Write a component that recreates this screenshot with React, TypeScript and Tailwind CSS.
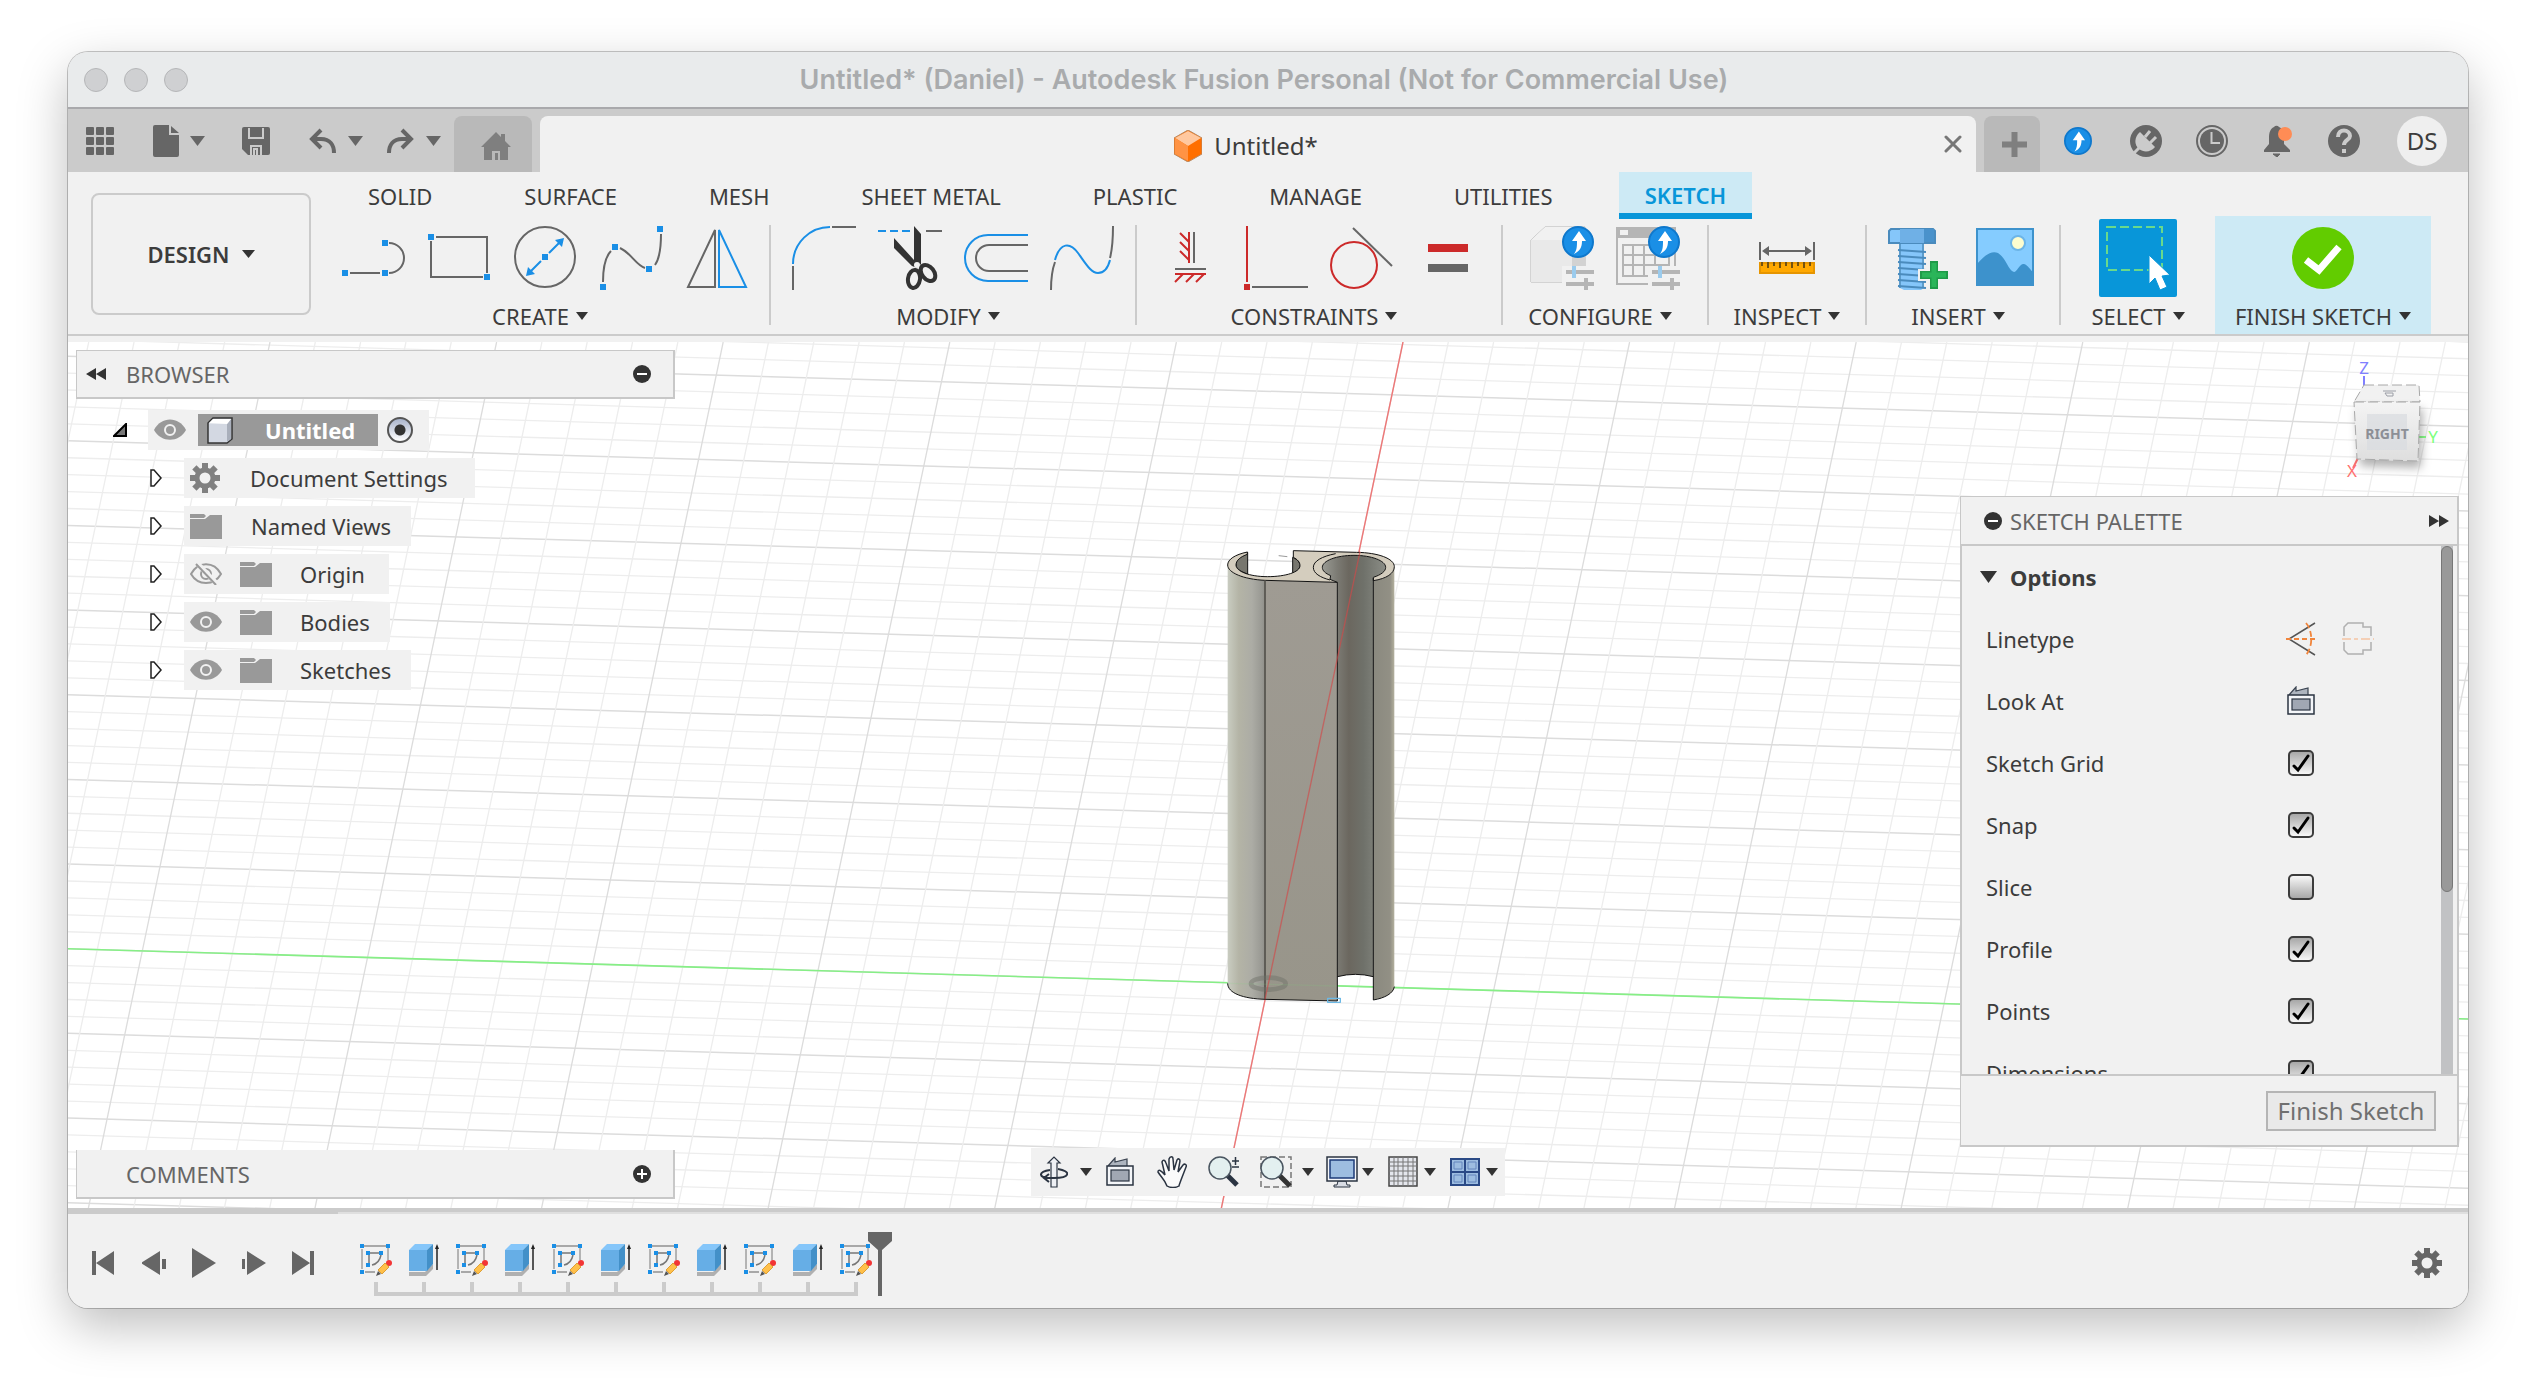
import React from "react";

const BLUE = "#1a8fe6";
const GRAY = "#666666";
const RED = "#cc2a2a";

function Svg({ w, h, children, box }: { w: number; h: number; children: React.ReactNode; box?: string }) {
  return (
    <svg width={w} height={h} viewBox={box ?? `0 0 ${w} ${h}`} fill="none" aria-hidden="true" className="block shrink-0">
      {children}
    </svg>
  );
}

function Caret({ w = 12, h = 8, color = "#333" }: { w?: number; h?: number; color?: string }) {
  return (
    <Svg w={w} h={h}>
      <path d={`M0 0H${w}L${w / 2} ${h}Z`} fill={color} />
    </Svg>
  );
}

/* ---------- title bar ---------- */

function TitleBar() {
  return (
    <header className="relative flex h-[57px] shrink-0 items-center border-b-2 border-[#a9a9ac] bg-[#e9ebec] px-4">
      <div className="flex gap-4">
        {["Close", "Minimise", "Zoom"].map((n) => (
          <button key={n} aria-label={n} className="size-6 rounded-full border border-[#b5b6b8] bg-[#cfd0d2]" />
        ))}
      </div>
      <h1 className="flex-1 pr-[112px] text-center font-['Inter'] text-[27px] font-semibold text-[#a9abad]">
        Untitled* (Daniel) - Autodesk Fusion Personal (Not for Commercial Use)
      </h1>
    </header>
  );
}

/* ---------- tab bar ---------- */

function UploadBadge({ cx, cy, r }: { cx: number; cy: number; r: number }) {
  return (
    <g transform={`translate(${cx} ${cy}) scale(${r / 16})`}>
      <circle r="15" fill={BLUE} stroke="#0f78cc" strokeWidth="2" />
      <path d="M1-11L8-1H4C4 5 2 9-4 12C-1 8-1 4-1-1H-6Z" fill="#fff" />
    </g>
  );
}

function TabBar() {
  return (
    <nav className="flex h-[63px] shrink-0 items-end bg-[#cbcbcb]">
      <div className="flex h-full w-[386px] shrink-0 items-center pl-[18px]">
        <button aria-label="Data panel">
          <Svg w={28} h={28}>
            {[0, 10, 20].map((y) =>
              [0, 10, 20].map((x) => <rect key={`${x}-${y}`} x={x} y={y} width="8" height="8" rx="1" fill={GRAY} />)
            )}
          </Svg>
        </button>
        <button aria-label="File" className="ml-[39px] flex items-center gap-[11px]">
          <Svg w={26} h={32}>
            <path d="M2 0H16V10H26V30a2 2 0 0 1-2 2H2a2 2 0 0 1-2-2V2a2 2 0 0 1 2-2Z" fill={GRAY} />
            <path d="M18 1L26 8H18Z" fill={GRAY} />
          </Svg>
          <Caret w={15} h={10} color={GRAY} />
        </button>
        <button aria-label="Save" className="ml-[37px]">
          <Svg w={28} h={28}>
            <path d="M2 0H26a2 2 0 0 1 2 2V26a2 2 0 0 1-2 2H6L0 22V2a2 2 0 0 1 2-2Z" fill={GRAY} />
            <path d="M7 1V11H21V1M9 28V19H19V28" stroke="#cbcbcb" strokeWidth="2" />
            <path d="M15 28V22H12V28" stroke="#cbcbcb" strokeWidth="2" />
          </Svg>
        </button>
        <button aria-label="Undo" className="ml-[39px] flex items-center gap-3">
          <Svg w={27} h={26}>
            <path d="M12 2L3 11L12 20M4 11H12C21 11 25 17 25 25" stroke={GRAY} strokeWidth="4" />
          </Svg>
          <Caret w={15} h={10} color={GRAY} />
        </button>
        <button aria-label="Redo" className="ml-6 flex items-center gap-3">
          <Svg w={27} h={26}>
            <path d="M15 2L24 11L15 20M23 11H15C6 11 2 17 2 25" stroke={GRAY} strokeWidth="4" />
          </Svg>
          <Caret w={15} h={10} color={GRAY} />
        </button>
      </div>
      <button aria-label="Home" className="flex h-14 w-[78px] shrink-0 items-center justify-center rounded-t-lg bg-[#b9b9b9] pt-1 pl-[6px]">
        <Svg w={30} h={28}>
          <path d="M15 0L20 5V2H24V9L30 15H27V28H19V19H11V28H3V15H0Z" fill="#7f7f7f" />
          <rect x="14" y="21" width="3" height="7" fill="#7f7f7f" />
        </Svg>
      </button>
      <div className="ml-2 flex h-14 flex-1 items-center rounded-t-lg bg-[#f1f1f1] pr-[14px]">
        <div className="flex flex-1 items-center justify-center gap-3 pt-1 pl-2">
          <Svg w={28} h={32}>
            <path d="M14 0L28 8V24L14 32L0 24V8Z" fill="#ff6f00" stroke="#b98a63" strokeWidth="1" />
            <path d="M14 1L27 8L14 16L1 8Z" fill="#ffc89f" />
            <path d="M1 8L14 16V31L1 24Z" fill="#ff9344" />
          </Svg>
          <span className="text-[24px] leading-8 text-[#3c3c3c]">Untitled*</span>
        </div>
        <button aria-label="Close tab">
          <Svg w={18} h={18}>
            <path d="M2 2L16 16M16 2L2 16" stroke="#777" strokeWidth="3" strokeLinecap="round" />
          </Svg>
        </button>
      </div>
      <button aria-label="New tab" className="ml-2 flex h-14 w-14 shrink-0 items-center justify-center rounded-t-lg bg-[#b9b9b9] pl-1">
        <Svg w={25} h={25}>
          <path d="M12.500 0V25M0 12.500H25" stroke="#7f7f7f" strokeWidth="6" />
        </Svg>
      </button>
      <div className="flex h-full shrink-0 items-center pr-[21px] pl-[22px]">
        <button aria-label="Upload">
          <Svg w={32} h={32}><UploadBadge cx={16} cy={16} r={14} /></Svg>
        </button>
        <button aria-label="Extensions" className="ml-9">
          <Svg w={32} h={32}>
            <circle cx="16" cy="16" r="16" fill={GRAY} />
            <path d="M10 7L25 22C21 27 14 28 9 24C4 20 4 12 10 7Z" fill="#cbcbcb" />
            <path d="M15 12L20 6M20 18L26 12" stroke="#cbcbcb" strokeWidth="3" />
            <path d="M9 23L4 28" stroke="#cbcbcb" strokeWidth="3" />
          </Svg>
        </button>
        <button aria-label="Job status" className="ml-[34px]">
          <Svg w={32} h={32}>
            <circle cx="16" cy="16" r="15" stroke={GRAY} strokeWidth="2" />
            <circle cx="16" cy="16" r="12" fill={GRAY} />
            <path d="M15.500 7V18H24" stroke="#cbcbcb" strokeWidth="2" />
          </Svg>
        </button>
        <button aria-label="Notifications" className="ml-[34px]">
          <Svg w={32} h={32}>
            <path d="M12 2a3 3 0 0 1 5 0C21 4 22 8 22 13V19L28 25V27H2V25L7 19V13C7 8 8 4 12 2Z" fill={GRAY} />
            <path d="M11 29H18L15 32Z" fill={GRAY} stroke={GRAY} />
            <circle cx="23" cy="9" r="7" fill="#ff8c55" />
          </Svg>
        </button>
        <button aria-label="Help" className="ml-[34px]">
          <Svg w={32} h={32}>
            <circle cx="16" cy="16" r="16" fill={GRAY} />
            <path d="M10 12C10 3 22 4 22 11C22 15 16 15 16 20" stroke="#cbcbcb" strokeWidth="4" />
            <rect x="14" y="24" width="4" height="4" fill="#cbcbcb" />
          </Svg>
        </button>
        <button className="ml-[37px] size-[50px] rounded-full bg-[#efefef] text-[24px] text-[#3c3c3c]">DS</button>
      </div>
    </nav>
  );
}

/* ---------- ribbon icons ---------- */

function Dot({ x, y, fill = BLUE }: { x: number; y: number; fill?: string }) {
  return <rect x={x - 3} y={y - 3} width="6" height="6" fill={fill} />;
}

const icons: Record<string, React.ReactNode> = {
  Line: (
    <Svg w={64} h={64}>
      <path d="M9 47H39M48 17a15 15 0 0 1 0 30" stroke={GRAY} strokeWidth="2" />
      <Dot x={4} y={47} /><Dot x={44} y={47} /><Dot x={44} y={17} />
    </Svg>
  ),
  Rectangle: (
    <Svg w={64} h={64}>
      <path d="M9 11H60V47M4 15V51H56" stroke={GRAY} strokeWidth="2" />
      <Dot x={4} y={11} /><Dot x={60} y={51} />
    </Svg>
  ),
  Circle: (
    <Svg w={64} h={64}>
      <circle cx="32" cy="31" r="30" stroke={GRAY} strokeWidth="2" />
      <path d="M36 27L47 16M28 35L17 46" stroke={BLUE} strokeWidth="2" />
      <path d="M51 12L49 21L42 14ZM13 50L15 41L22 48Z" fill={BLUE} />
      <Dot x={32} y={31} />
    </Svg>
  ),
  Spline: (
    <Svg w={64} h={64}>
      <path d="M4 56C4 42 7 30 12 25M21 22C32 27 37 39 46 42M56 39C61 32 62 22 62 8" stroke={GRAY} strokeWidth="2" />
      <Dot x={4} y={61} /><Dot x={16} y={21} /><Dot x={50} y={43} /><Dot x={61} y={3} />
    </Svg>
  ),
  Mirror: (
    <Svg w={64} h={64}>
      <path d="M30 4V61H3Z" stroke={GRAY} strokeWidth="2" />
      <path d="M34 4V61H61Z" stroke={BLUE} strokeWidth="2" />
    </Svg>
  ),
  Fillet: (
    <Svg w={64} h={64}>
      <path d="M1 40V64M40 1H64" stroke={GRAY} strokeWidth="2" />
      <path d="M1 38C1 17 18 1 38 1" stroke={BLUE} strokeWidth="2" />
    </Svg>
  ),
  Trim: (
    <Svg w={64} h={64}>
      <path d="M0 5H8M12 5H20M24 5H32" stroke={BLUE} strokeWidth="2" />
      <path d="M48 5H64" stroke={GRAY} strokeWidth="2" />
      <path d="M36 0L43 8V38L39 42L34 40L16 22V12L36 34Z" fill="#333" />
      <circle cx="39" cy="39" r="3" fill="#f1f1f1" />
      <ellipse cx="36" cy="53" rx="6" ry="9" transform="rotate(8 36 53)" stroke="#333" strokeWidth="4" />
      <ellipse cx="50" cy="47" rx="6" ry="9" transform="rotate(-38 50 47)" stroke="#333" strokeWidth="4" />
    </Svg>
  ),
  Offset: (
    <Svg w={64} h={64}>
      <path d="M64 9H24a23 23 0 0 0 0 46H64" stroke={BLUE} strokeWidth="2" />
      <path d="M64 19H25a13 13 0 0 0 0 26H64" stroke={GRAY} strokeWidth="2" />
    </Svg>
  ),
  Extend: (
    <Svg w={64} h={64}>
      <path d="M1 64C1 53 2 44 5 36M60 32C62 24 63 14 63 0" stroke={GRAY} strokeWidth="2" />
      <path d="M5 34C10 16 20 16 28 27C36 38 41 47 48 47C54 47 58 42 60 34" stroke={BLUE} strokeWidth="2" />
    </Svg>
  ),
  Horizontal: (
    <Svg w={64} h={64}>
      <path d="M31 6V37M22 7L31 16M22 16L31 25M22 25L31 34M17 48H48M17 56L25 48M28 56L36 48M38 56L46 48" stroke={RED} strokeWidth="2" />
      <path d="M36 6V37M17 43H48" stroke={GRAY} strokeWidth="2" />
    </Svg>
  ),
  Perpendicular: (
    <Svg w={64} h={64}>
      <path d="M3 0V56" stroke={RED} strokeWidth="2" />
      <Dot x={3} y={61} fill={RED} />
      <path d="M8 61H64" stroke={GRAY} strokeWidth="2" />
    </Svg>
  ),
  Tangent: (
    <Svg w={64} h={64}>
      <circle cx="24" cy="39" r="23" stroke={RED} strokeWidth="2" />
      <path d="M23 2L62 40" stroke={GRAY} strokeWidth="2" />
    </Svg>
  ),
  Equal: (
    <Svg w={64} h={64}>
      <rect x="12" y="18" width="40" height="8" fill={RED} />
      <rect x="12" y="38" width="40" height="8" fill={GRAY} />
    </Svg>
  ),
  Configure: (
    <Svg w={64} h={64}>
      <path d="M1 14L15 1H55V56H1Z" fill="#e6e6e6" stroke="#b5b5b5" />
      <path d="M1 14H42V56H1Z" fill="#e9e9e9" />
      <path d="M1 14L15 1H55L42 14Z" fill="#f1f1f1" />
      <path d="M42 14L55 1V56H42Z" fill="#d2d2d2" />
      <path d="M32 40H64V64H32Z" fill="#f1f1f1" />
      <path d="M36 46H64M36 58H64M56 52V64" stroke="#b5b5b5" strokeWidth="4" />
      <path d="M44 40V52" stroke="#9acbed" strokeWidth="4" />
      <UploadBadge cx={48} cy={16} r={16} />
    </Svg>
  ),
  "Configuration table": (
    <Svg w={64} h={64}>
      <path d="M1 2H59V58H1Z" stroke="#b5b5b5" strokeWidth="2" />
      <rect x="0" y="1" width="60" height="11" fill="#b5b5b5" />
      <rect x="4" y="4" width="8" height="5" fill="#f1f1f1" />
      <path d="M7 19H53V50H7ZM17 19V50M28 19V50M39 19V50M7 29H53M7 39H53" stroke="#b5b5b5" strokeWidth="2" />
      <path d="M32 40H64V64H32Z" fill="#f1f1f1" />
      <path d="M36 46H64M36 58H64M56 52V64" stroke="#b5b5b5" strokeWidth="4" />
      <path d="M44 40V52" stroke="#9acbed" strokeWidth="4" />
      <UploadBadge cx={48} cy={16} r={16} />
    </Svg>
  ),
  Measure: (
    <Svg w={64} h={64}>
      <path d="M5 16V34M59 16V34M12 25H52" stroke={GRAY} strokeWidth="2" />
      <path d="M7 25L14 20V30ZM57 25L50 20V30Z" fill={GRAY} />
      <rect x="5" y="37" width="54" height="10" fill="#ffa800" stroke="#e69500" strokeWidth="2" />
      <path d="M7 36V40M13 36V42M19 36V40M25 36V42M31 36V40M37 36V42M43 36V40M49 36V42M55 36V40" stroke="#73510f" strokeWidth="2" />
    </Svg>
  ),
  "Insert fastener": (
    <Svg w={64} h={64}>
      <path d="M3 3H45L47 5V17H1V5Z" fill="#85c6fa" stroke="#4a8bbd" strokeWidth="2" />
      <path d="M12 3H36V17H12Z" fill="#6fb0e6" /><path d="M36 3H46V16H36Z" fill="#4a92cb" />
      <path d="M12 18H36V62L33 64H16L12 62Z" fill="#85c6fa" />
      <path d="M12 18V62M35 18V62" stroke="#5d9ccb" strokeWidth="2" />
      <path d="M10 24L38 26M10 30L38 32M10 36L38 38M10 42L38 44M10 48L38 50M10 54L38 56M10 60L38 62" stroke="#4a8bbd" strokeWidth="2" />
      <path d="M46 34V64M30 49H62" stroke="#f1f1f1" strokeWidth="12" />
      <path d="M46 35V63M32 49H60" stroke="#1f9a48" strokeWidth="8" />
      <path d="M46 37V61M34 49H58" stroke="#2ab559" strokeWidth="5" />
    </Svg>
  ),
  "Insert image": (
    <Svg w={64} h={64}>
      <rect x="3" y="3" width="56" height="56" fill="#85ccff" stroke="#3d92cc" strokeWidth="2" />
      <circle cx="44" cy="17" r="7" fill="#fdfdcf" stroke="#6cb5e8" strokeWidth="2" />
      <path d="M3 38C10 30 17 24 24 27C32 32 34 44 40 46C43 46 46 37 50 38C54 39 56 44 60 47V60H3Z" fill="#3d92cc" />
    </Svg>
  ),
  "Select tool": (
    <Svg w={78} h={78}>
      <rect width="78" height="78" rx="2" fill="#0896d9" />
      <rect x="8" y="8" width="55" height="43" stroke="#69d98b" strokeWidth="2" strokeDasharray="9 4" />
      <path d="M50 36L71 56L63 57L68 68L61 71L56 59L50 65Z" fill="#fff" stroke="#0896d9" />
    </Svg>
  ),
  Finish: (
    <Svg w={64} h={64}>
      <circle cx="32" cy="32" r="31" fill="#62cc00" />
      <path d="M15 34L28 44L48 21" stroke="#fff" strokeWidth="7" />
    </Svg>
  ),
};

type Group = { label: string; tools: string[]; box: string; sep: boolean };
const groups: Group[] = [
  { label: "CREATE", tools: ["Line", "Rectangle", "Circle", "Spline", "Mirror"], box: "pr-[20px]", sep: false },
  { label: "MODIFY", tools: ["Fillet", "Trim", "Offset", "Extend"], box: "px-[21px]", sep: true },
  { label: "CONSTRAINTS", tools: ["Horizontal", "Perpendicular", "Tangent", "Equal"], box: "px-[21px]", sep: true },
  { label: "CONFIGURE", tools: ["Configure", "Configuration table"], box: "w-[204px]", sep: true },
  { label: "INSPECT", tools: ["Measure"], box: "w-[156px]", sep: true },
  { label: "INSERT", tools: ["Insert fastener", "Insert image"], box: "w-[192px]", sep: true },
  { label: "SELECT", tools: ["Select tool"], box: "w-[154px]", sep: true },
  { label: "FINISH SKETCH", tools: ["Finish"], box: "bg-[#cdeaf5] w-[216px]", sep: false },
];

const tabs = ["SOLID", "SURFACE", "MESH", "SHEET METAL", "PLASTIC", "MANAGE", "UTILITIES"];

function Ribbon() {
  return (
    <section className="shrink-0 border-b-[6px] border-[#f1f1f1] bg-[#f1f1f1]">
      <div className="flex border-b-2 border-[#cbcbcb] pl-[23px]">
        <button className="mt-[21px] flex h-[122px] w-[220px] shrink-0 items-center justify-center gap-3 rounded-lg border-2 border-[#cbcbcb] text-[22px] font-semibold text-[#3c3c3c]">
          DESIGN <Caret w={13} />
        </button>
        <div className="ml-[6px] flex-1">
          <div role="tablist" className="ml-[25px] flex h-[47px] gap-10">
            {tabs.map((t) => (
              <button key={t} role="tab" className="px-[26px] whitespace-nowrap">{t}</button>
            ))}
            <button role="tab" aria-selected="true" className="border-b-[6px] border-[#0896d9] bg-[#cdeaf5] px-[26px] pt-[4px] font-semibold text-[#0896d9]">
              SKETCH
            </button>
          </div>
          <div className="-mt-[3px] ml-6 flex">
            {groups.map((g) => (
              <React.Fragment key={g.label}>
                {g.sep && <div className="my-[9px] w-[2px] bg-[#cbcbcb]" />}
                <div className={`flex shrink-0 flex-col items-center pt-[3px] ${g.box}`}>
                  <div className="flex h-[78px] items-center gap-[22px]">
                    {g.tools.map((t) => (
                      <button key={t} aria-label={t}>{icons[t]}</button>
                    ))}
                  </div>
                  <button className={`flex h-[37px] items-center gap-[7px] whitespace-nowrap ${g.tools.length > 1 ? "pr-[10px]" : ""}`}>
                    {g.label} <Caret />
                  </button>
                </div>
              </React.Fragment>
            ))}
          </div>
        </div>
      </div>
    </section>
  );
}

/* ---------- canvas ---------- */

const SLOPE_H = 0.0293;
const SLOPE_V = -0.2097;

function Scene() {
  const rows = Array.from({ length: 62 }, (_, i) => i - 42);
  const cols = Array.from({ length: 62 }, (_, i) => i - 31);
  const y = (k: number, x: number) => 606.7 + k * 16.93 + SLOPE_H * x;
  const x = (k: number, yy: number) => 1335 + k * 45.32 + SLOPE_V * yy;
  return (
    <svg className="absolute inset-0 h-full w-full" fill="none" aria-label="3D model on the sketch grid">
      <defs>
        <linearGradient id="side" x1="143" x2="255" y1="0" y2="0" gradientUnits="userSpaceOnUse">
          <stop offset="0" stopColor="#c9ccc1" /><stop offset=".3" stopColor="#b4b4a6" />
          <stop offset=".65" stopColor="#acaca5" /><stop offset=".9" stopColor="#9a9a94" /><stop offset="1" stopColor="#908f89" />
        </linearGradient>
        <linearGradient id="face" x1="0" x2="0" y1="180" y2="1440" gradientUnits="userSpaceOnUse">
          <stop offset="0" stopColor="#9f9b93" /><stop offset="1" stopColor="#98958a" />
        </linearGradient>
        <linearGradient id="bore" x1="427" x2="617" y1="0" y2="0" gradientUnits="userSpaceOnUse">
          <stop offset="0" stopColor="#9a9b94" /><stop offset=".24" stopColor="#7b7a73" /><stop offset=".42" stopColor="#6b675f" />
          <stop offset=".65" stopColor="#6f716a" /><stop offset="1" stopColor="#8b8d86" />
        </linearGradient>
        <linearGradient id="rim" x1="580" x2="643" y1="0" y2="0" gradientUnits="userSpaceOnUse">
          <stop offset="0" stopColor="#8a897f" /><stop offset=".8" stopColor="#929085" /><stop offset="1" stopColor="#b3b09d" />
        </linearGradient>
      </defs>
      {rows.map((k) => (
        <line key={`r${k}`} x1="0" x2="3200" y1={y(k, 0)} y2={y(k, 3200)} stroke={k % 5 === 0 ? "#dcdcdc" : "#ededed"} strokeWidth={k % 5 === 0 ? 1.5 : 1.3} />
      ))}
      {cols.map((k) => (
        <line key={`c${k}`} x1={x(k, 0)} x2={x(k, 1200)} y1="0" y2="1200" stroke={k % 5 === 0 ? "#dcdcdc" : "#ededed"} strokeWidth="1.3" />
      ))}
      <line x1="0" x2="3200" y1={y(0, 0)} y2={y(0, 3200)} stroke="#86ef86" strokeWidth="1.6" />
      <line x1={x(0, 0)} x2={x(0, 1200)} y1="0" y2="1200" stroke="#ee7777" strokeWidth="1.4" />
      <g transform="translate(1112 178) scale(.33333)" strokeLinejoin="round">
        <path d="M203 97C180 105 168 118 168 135C168 146 182 155 203 162ZM338 112C352 118 360 126 360 137C360 146 352 154 338 160Z" fill="#77766e" stroke="#111" strokeWidth="3" />
        <path d="M143 135C143 158 190 178 255 181V1438C190 1436 143 1420 143 1390Z" fill="url(#side)" />
        <path d="M255 181L472 187V1443L255 1438Z" fill="url(#face)" />
        <path d="M472 187L450 178C434 168 427 155 427 142C427 122 470 106 522 106C574 106 617 122 617 142C617 155 605 168 580 174V1370Q526 1355 472 1370Z" fill="url(#bore)" />
        <path d="M580 182C620 176 643 160 643 140V1402C640 1420 615 1434 580 1440Z" fill="url(#rim)" />
        <path
          d="M202 96C165 104 143 118 143 135C143 158 190 178 255 181L472 187L450 178L452 167C436 160 427 152 427 142C427 122 470 106 522 106C574 106 617 122 617 142C617 154 604 164 580 172V182C620 176 643 160 643 140C643 116 595 98 530 97L340 92V112C352 118 360 126 360 137C360 156 318 170 262 170C208 170 168 154 168 135C168 121 182 110 202 103Z"
          fill="#d4cdbe" stroke="#111" strokeWidth="3"
        />
        <path d="M467 101C425 109 400 124 400 142C400 160 420 172 450 180" stroke="#111" strokeWidth="3" />
        <path d="M296 107L322 110" stroke="#999" strokeWidth="3" />
        <path d="M255 181V1438" stroke="#54524c" strokeWidth="5" />
        <path d="M472 187V1443L255 1438C190 1436 143 1420 143 1390M580 174V1440C615 1434 640 1420 643 1400M472 1370Q526 1356 580 1370" stroke="#111" strokeWidth="3" />
        <ellipse cx="265" cy="1391" rx="52" ry="18" stroke="#6d6f66" strokeOpacity=".45" strokeWidth="14" />
        <path d="M143 1390L472 1398" stroke="#7fd67f" strokeOpacity=".15" strokeWidth="4" />
        <path d="M540 95L255 1438" stroke="#d24848" strokeOpacity=".65" strokeWidth="4" />
        <rect x="443" y="1435" width="38" height="12" stroke="#6cb9e6" strokeWidth="4" />
      </g>
    </svg>
  );
}

function ViewCube() {
  return (
    <div className="absolute top-[13px] right-[18px]">
      <svg width="110" height="136" viewBox="0 0 110 136" fill="none" fontFamily="Noto Sans, sans-serif" aria-label="View cube" className="block overflow-visible">
        <defs>
          <linearGradient id="cubeFace" x1="0" x2="0" y1="0" y2="1">
            <stop offset="0" stopColor="#f4f4f4" /><stop offset="1" stopColor="#dedede" />
          </linearGradient>
          <filter id="cubeShadow" x="-30%" y="-30%" width="160%" height="180%">
            <feDropShadow dx="3" dy="7" stdDeviation="5" floodOpacity=".3" />
          </filter>
        </defs>
        <path d="M24 21V31" stroke="#8080ff" strokeWidth="2" />
        <path d="M79 82H86" stroke="#8aff8a" strokeWidth="2" />
        <path d="M18 103L13 113" stroke="#ff7070" strokeWidth="2" />
        <path d="M24 30H79L80 47H14Z" fill="#f1f1f1" stroke="#a8a8a8" strokeDasharray="10 4" />
        <path d="M14 47H80L78 106L17 104Z" fill="url(#cubeFace)" filter="url(#cubeShadow)" />
        <path d="M14 47H80L78 106L17 104Z" stroke="#a8a8a8" strokeDasharray="10 4" />
        <rect x="27" y="59" width="40" height="36" fill="#d9dbe0" fillOpacity=".7" />
        <path d="M43 36H56M45 38H53V41H47Z" stroke="#9b9ea6" />
        <text x="47" y="84" fontSize="14" fontWeight="700" fill="#8c8f96" textAnchor="middle">RIGHT</text>
        <text x="24" y="19" fontSize="17" fill="#8080ff" textAnchor="middle">Z</text>
        <text x="93" y="88" fontSize="17" fill="#7dff7d" textAnchor="middle">Y</text>
        <text x="12" y="122" fontSize="17" fill="#ff7070" textAnchor="middle">X</text>
      </svg>
    </div>
  );
}

/* ---------- browser ---------- */

function Eye() {
  return (
    <Svg w={32} h={22}>
      <path d="M0 11C7-3 25-3 32 11C25 24 7 24 0 11Z" fill="#999" />
      <circle cx="16" cy="11" r="5" stroke="#f1f1f1" strokeWidth="2" />
    </Svg>
  );
}

function EyeOff() {
  return (
    <Svg w={32} h={22}>
      <path d="M1 11C8-2 24-2 31 11C24 23 8 23 1 11Z" stroke="#999" strokeWidth="2" />
      <circle cx="16" cy="11" r="5" stroke="#999" strokeWidth="2" />
      <path d="M7 0L27 21" stroke="#f1f1f1" strokeWidth="5" />
      <path d="M6 1L26 22" stroke="#999" strokeWidth="2" />
    </Svg>
  );
}

function Folder() {
  return (
    <Svg w={32} h={26}>
      <path d="M0 1H14L16 3L14 5H0Z" fill="#999" />
      <path d="M0 6H15L20 2H32V26H0Z" fill="#999" />
    </Svg>
  );
}

function Gear({ color }: { color: string }) {
  return (
    <Svg w={30} h={30} box="-15 -15 30 30">
      {[0, 45, 90, 135].map((a) => (
        <rect key={a} x="-3" y="-15" width="6" height="30" transform={`rotate(${a})`} fill={color} />
      ))}
      <circle r="8" stroke={color} strokeWidth="5" fill="#f1f1f1" />
    </Svg>
  );
}

function Expander({ label }: { label: string }) {
  return (
    <button aria-label={`Expand ${label}`} className="mr-[22px]">
      <Svg w={12} h={18}>
        <path d="M1 1H4L11 9L4 17H1Z" fill="#fff" stroke="#222" strokeWidth="1.500" />
      </Svg>
    </button>
  );
}

function BrowserPanel() {
  const rows: { name: string; icons: React.ReactNode; pad: string }[] = [
    { name: "Document Settings", icons: <Gear color="#808080" />, pad: "pl-[6px] gap-[30px] pr-7" },
    { name: "Named Views", icons: <Folder />, pad: "pl-[6px] gap-[29px] pr-5" },
    { name: "Origin", icons: <><EyeOff /><Folder /></>, pad: "pl-[6px] gap-[18px] pr-6" },
    { name: "Bodies", icons: <><Eye /><Folder /></>, pad: "pl-[6px] gap-[18px] pr-5" },
    { name: "Sketches", icons: <><Eye /><Folder /></>, pad: "pl-[6px] gap-[18px] pr-5" },
  ];
  return (
    <aside className="absolute top-2 left-2 w-[599px]">
      <div className="flex h-[49px] items-center border border-r-2 border-b-2 border-[#c8c8c8] bg-[#f1f1f1] pr-[22px] pl-[9px]">
        <button aria-label="Collapse browser">
          <Svg w={20} h={12}><path d="M10 0V12L0 6ZM20 0V12L10 6Z" fill="#333" /></Svg>
        </button>
        <h2 className="ml-5 flex-1 text-[#666]">BROWSER</h2>
        <button aria-label="Minimise browser">
          <Svg w={18} h={18}><circle cx="9" cy="9" r="9" fill="#333" /><path d="M4 9H14" stroke="#fff" strokeWidth="2" /></Svg>
        </button>
      </div>
      <ul className="mt-[11px] flex flex-col items-start gap-2 pl-[74px]">
        <li className="-ml-[37px] flex h-10 items-center">
          <button aria-label="Collapse Untitled" className="mr-[21px]">
            <Svg w={14} h={14}><path d="M1 13H13V1Z" fill="#777" stroke="#000" strokeWidth="2" /></Svg>
          </button>
          <div className="flex h-10 items-center bg-[#f1f1f1] px-[6px] pr-4">
            <Eye />
            <div className="mr-[9px] ml-3 flex h-8 w-[180px] items-center gap-8 bg-[#999] pl-[9px] font-bold text-white">
              <Svg w={26} h={27}>
                <path d="M1 6L6 1H25V22L20 26H1Z" fill="#dfe3ea" stroke="#333" strokeWidth="1.500" />
                <path d="M2 7H20V25H2Z" fill="#d3d8e2" /><path d="M20 7L24 2V22L20 25Z" fill="#a9afbb" /><path d="M2 6L6 2H24L20 7Z" fill="#fff" />
              </Svg>
              Untitled
            </div>
            <input
              type="radio" defaultChecked aria-label="Activate Untitled"
              className="size-[26px] appearance-none rounded-full border-2 border-[#555] bg-[radial-gradient(circle,#333_0_5px,transparent_6px),linear-gradient(#a9b4cc,#ffffff)]"
            />
          </div>
        </li>
        {rows.map((r) => (
          <li key={r.name} className="flex h-10 items-center">
            <Expander label={r.name} />
            <div className={`flex h-10 items-center bg-[#f1f1f1] ${r.pad}`}>
              {r.icons}
              <span className={r.name.length < 9 ? "ml-[10px]" : ""}>{r.name}</span>
            </div>
          </li>
        ))}
      </ul>
    </aside>
  );
}

function CommentsPanel() {
  return (
    <aside className="absolute bottom-[9px] left-2 flex h-[49px] w-[599px] items-center border-r-2 border-b-2 border-l border-[#c8c8c8] bg-[#f1f1f1] pr-[22px] pl-[49px]">
      <h2 className="flex-1 text-[#666]">COMMENTS</h2>
      <button aria-label="Expand comments">
        <Svg w={18} h={18}><circle cx="9" cy="9" r="9" fill="#333" /><path d="M4 9H14M9 4V14" stroke="#fff" strokeWidth="2" /></Svg>
      </button>
    </aside>
  );
}

/* ---------- sketch palette ---------- */

function LookAtIcon() {
  return (
    <Svg w={28} h={30}>
      <path d="M2 9L9 1V5L21 2V9" fill="#aeb5bf" stroke="#3a4350" strokeWidth="1.200" />
      <rect x="1" y="9" width="26" height="19" fill="#f4f6f9" stroke="#2b3442" strokeWidth="1.500" />
      <rect x="5" y="13" width="18" height="11" fill="#a0a7b3" stroke="#2b3442" strokeWidth="1.200" />
    </Svg>
  );
}

function CheckRow({ label, checked }: { label: string; checked: boolean }) {
  return (
    <label className="flex h-[62px] items-center">
      <span className="w-[302px]">{label}</span>
      <span className="relative">
        <input
          type="checkbox" defaultChecked={checked}
          className="peer block size-[26px] appearance-none rounded-[5px] border-2 border-[#3c3c3c] bg-linear-to-b from-[#f8f8f8] to-[#a8a8a8] checked:from-[#a8a8a8] checked:to-[#f8f8f8]"
        />
        <svg className="pointer-events-none absolute inset-0 hidden peer-checked:block" width="26" height="26" fill="none">
          <path d="M6 16L10 20L20 6" stroke="#000" strokeWidth="3" strokeLinecap="round" />
        </svg>
      </span>
    </label>
  );
}

function SketchPalette() {
  return (
    <aside className="absolute top-[154px] right-[9px] w-[499px]">
      <div className="flex h-[50px] items-center border border-r-2 border-b-2 border-[#c8c8c8] bg-[#f1f1f1] pr-2 pl-[23px]">
        <button aria-label="Minimise palette">
          <Svg w={18} h={18}><circle cx="9" cy="9" r="9" fill="#333" /><path d="M4 9H14" stroke="#fff" strokeWidth="2" /></Svg>
        </button>
        <h2 className="ml-2 flex-1 text-[#666]">SKETCH PALETTE</h2>
        <button aria-label="Dock palette">
          <Svg w={20} h={12}><path d="M0 0V12L10 6ZM10 0V12L20 6Z" fill="#333" /></Svg>
        </button>
      </div>
      <div className="flex h-[530px] border-x-2 border-b-2 border-[#c8c8c8] bg-[#f1f1f1] pr-1">
        <div className="flex-1 overflow-hidden pl-6">
          <button className="-ml-[6px] flex h-[62px] items-center gap-[13px] font-bold">
            <Caret w={17} h={12} /> Options
          </button>
          <div className="flex h-[62px] items-center">
            <span className="w-[300px]">Linetype</span>
            <button aria-label="Construction">
              <Svg w={32} h={34}>
                <path d="M29 1L3 17L29 33" stroke="#555" strokeWidth="1.500" />
                <path d="M0 17H32" stroke="#f0853c" strokeWidth="1.800" strokeDasharray="5 3" />
                <path d="M20 1C27 9 27 25 20 33" stroke="#f0853c" strokeWidth="1.800" strokeDasharray="6 3" />
              </Svg>
            </button>
            <button aria-label="Centerline" className="ml-6">
              <Svg w={32} h={34}>
                <path d="M2 14V5L6 1H21V5H29V14M2 20V28L6 32H21V28H29V20" stroke="#b0b0b0" strokeWidth="1.500" />
                <path d="M0 17H32" stroke="#f5c3a3" strokeWidth="1.500" strokeDasharray="9 3 4 3" />
              </Svg>
            </button>
          </div>
          <div className="flex h-[62px] items-center">
            <span className="w-[301px]">Look At</span>
            <button aria-label="Look at"><LookAtIcon /></button>
          </div>
          <CheckRow label="Sketch Grid" checked />
          <CheckRow label="Snap" checked />
          <CheckRow label="Slice" checked={false} />
          <CheckRow label="Profile" checked />
          <CheckRow label="Points" checked />
          <CheckRow label="Dimensions" checked />
        </div>
        <div className="w-3 bg-[#c1c2c4]">
          <div className="h-[346px] rounded-full border border-[#777] bg-[#999]" />
        </div>
      </div>
      <div className="flex h-[71px] items-center justify-end border-r-2 border-b-2 border-l border-[#c8c8c8] bg-[#f1f1f1] pr-[21px]">
        <button className="h-10 w-[170px] border-2 border-[#b5b5b5] bg-[#e9e9e9] text-[24px] leading-none whitespace-nowrap text-[#707070]">Finish Sketch</button>
      </div>
    </aside>
  );
}

/* ---------- navigation bar ---------- */

function NavBar() {
  const b = "flex shrink-0 items-center";
  const d = "#2b3442";
  return (
    <div role="toolbar" aria-label="Navigation" className="absolute bottom-3 left-1/2 flex h-12 w-[474px] -translate-x-1/2 items-center bg-[#f1f1f1] pl-[9px]">
      <button aria-label="Orbit" className={`${b} gap-3`}>
        <Svg w={28} h={32}>
          <path d="M11 31V7H8L14 1L20 7H17V31Z" fill="#eef0f4" stroke={d} strokeWidth="1.200" />
          <path d="M10 14C-3 16-1 22 10 22M18 13C31 15 31 22 14 22H6M9 18L4 22L9 26" stroke={d} strokeWidth="2" />
        </Svg>
        <Caret />
      </button>
      <button aria-label="Look at" className={`${b} ml-[14px]`}><LookAtIcon /></button>
      <button aria-label="Pan" className={`${b} ml-[23px]`}>
        <Svg w={30} h={32}>
          <path d="M10 30C8 24 4 21 1 16C1 13 4 14 8 19L5 6C6 3 8 4 9 7L12 15L12 3C13 0 16 0 16 3L17 14L20 4C21 2 23 3 23 5L21 16L26 9C28 7 30 9 29 11L24 24C23 27 22 29 22 30C19 32 13 32 10 30Z" fill="#fafafa" stroke={d} strokeWidth="1.500" />
        </Svg>
      </button>
      <button aria-label="Zoom" className={`${b} ml-[21px]`}>
        <Svg w={32} h={32}>
          <path d="M19 19L29 29" stroke={d} strokeWidth="5" />
          <circle cx="12" cy="12" r="11" fill="#e3f0f0" stroke="#4a5560" strokeWidth="1.500" />
          <path d="M24 5H31M27.500 1V9M24 11H31" stroke={d} strokeWidth="1.500" />
        </Svg>
      </button>
      <button aria-label="Zoom window" className={`${b} ml-5 gap-[10px]`}>
        <Svg w={32} h={32}>
          <rect x="1" y="1" width="30" height="30" stroke="#777" strokeWidth="1.500" strokeDasharray="6 3" />
          <path d="M19 19L30 30" stroke="#333" strokeWidth="5" />
          <circle cx="12" cy="12" r="11" fill="#e3f0f0" stroke="#4a5560" strokeWidth="1.500" />
        </Svg>
        <Caret />
      </button>
      <button aria-label="Display settings" className={`${b} ml-[12px] gap-1`}>
        <Svg w={32} h={32}>
          <path d="M12 25H20L21 29H24V31H8V29H11Z" fill="#d8dce4" stroke={d} />
          <rect x="1" y="1" width="30" height="24" fill="#f4f6f9" stroke={d} strokeWidth="1.500" />
          <rect x="4" y="4" width="24" height="18" fill="#9dbde0" stroke="#1d3b78" strokeWidth="1.500" />
        </Svg>
        <Caret />
      </button>
      <button aria-label="Grid and snaps" className={`${b} ml-[14px] gap-[6px]`}>
        <Svg w={30} h={32}>
          <rect x="1" y="1" width="28" height="29" fill="#e4e6ec" stroke="#444" strokeWidth="1.500" />
          <path d="M6 1V30M10 1V30M15 1V30M20 1V30M25 1V30M1 6H29M1 10H29M1 15H29M1 20H29M1 25H29" stroke="#777" />
        </Svg>
        <Caret />
      </button>
      <button aria-label="Viewports" className={`${b} ml-[14px] gap-[6px]`}>
        <Svg w={30} h={28}>
          <rect x="1" y="1" width="28" height="26" fill="#9dbde0" stroke="#2b4a86" strokeWidth="2" />
          <path d="M15 1V27M1 14H29" stroke="#2b4a86" strokeWidth="2" />
          <path d="M4 4H12V11H4ZM18 4H26V11H18ZM4 17H12V24H4ZM18 17H26V24H18Z" stroke="#6486bd" />
        </Svg>
        <Caret />
      </button>
    </div>
  );
}

/* ---------- timeline ---------- */

function SketchFeature() {
  return (
    <Svg w={32} h={32}>
      <path d="M4 2H26M5 28H15" stroke="#a8a8a8" strokeWidth="2" />
      <path d="M2 5V25M28 4V16" stroke="#777" strokeWidth="1" />
      <path d="M10 9H19M9 11V19M21 11C20 16 17 20 12 21" stroke="#777" strokeWidth="1.500" />
      {[[2, 2], [28, 2], [2, 28], [8, 9], [21, 9], [8, 21]].map(([x, y]) => (
        <rect key={`${x}-${y}`} x={x - 2} y={y - 2} width="4" height="4" fill={BLUE} />
      ))}
      <circle cx="29" cy="19" r="3" fill="#f23535" />
      <path d="M18 26L25 19L29 23L22 30Z" fill="#ffc04a" stroke="#dd9f37" strokeWidth="1" />
      <path d="M18 27L21 30L16 32Z" fill="#555" />
    </Svg>
  );
}

function ExtrudeFeature() {
  return (
    <Svg w={32} h={32}>
      <path d="M1 28H17L25 20V25L18 32H1Z" fill="#b0b0b0" />
      <path d="M1 6L7 0H25L19 6Z" fill="#85c6fa" />
      <path d="M1 6H19V27H1Z" fill="#66aee6" />
      <path d="M19 6L25 0V20L19 27Z" fill="#4390c8" />
      <path d="M29 4V26" stroke="#222" strokeWidth="1.500" />
      <path d="M29 0L31 5H27Z" fill="#222" />
    </Svg>
  );
}

function Timeline() {
  const controls = [
    { n: "Go to start", d: "M0 0H4V24H0ZM22 0V24L4 12Z" },
    { n: "Step back", d: "M18 0V24L-1 12ZM20 8H24V18H20Z" },
    { n: "Play", d: "M0-3V27L24 12Z" },
    { n: "Step forward", d: "M5 0V24L24 12ZM-1 8H3V18H-1Z" },
    { n: "Go to end", d: "M18 0H22V24H18ZM0 0V24L18 12Z" },
  ];
  return (
    <footer className="flex h-[94px] shrink-0 items-end bg-[#f1f1f1] pr-[26px] pb-3 pl-6">
      <div className="flex gap-[26px] pb-[18px]">
        {controls.map((c) => (
          <button key={c.n} aria-label={c.n}>
            <Svg w={24} h={30} box="0 -3 24 30"><path d={c.d} fill={GRAY} /></Svg>
          </button>
        ))}
      </div>
      <div className="ml-9">
        <ol className="flex">
          {Array.from({ length: 11 }, (_, i) => (
            <li key={i} className="flex w-12 flex-col items-center gap-[6px]">
              <button aria-label={i % 2 ? "Extrude" : "Sketch"}>{i % 2 ? <ExtrudeFeature /> : <SketchFeature />}</button>
              <div className="h-[10px] w-1 bg-[#cbcbcb]" />
            </li>
          ))}
        </ol>
        <div className="mx-[22px] h-1 bg-[#cbcbcb]" />
      </div>
      <button aria-label="Timeline marker" className="-ml-3">
        <Svg w={24} h={64}><path d="M0 0H24V9L14 18V64H10V18L0 9Z" fill={GRAY} /></Svg>
      </button>
      <button aria-label="Timeline settings" className="mb-[18px] ml-auto"><Gear color={GRAY} /></button>
    </footer>
  );
}

export default function App() {
  return (
    <div className="flex min-h-screen flex-col bg-white px-[68px] pt-[52px] pb-[84px] font-['Noto_Sans','Open_Sans',sans-serif] text-[22px] leading-[30px] text-[#3c3c3c]">
      <div className="flex flex-1 flex-col overflow-hidden rounded-[20px] bg-[#f1f1f1] shadow-[0_0_0_1px_rgba(0,0,0,0.22),0_18px_50px_rgba(0,0,0,0.26)]">
        <TitleBar />
        <TabBar />
        <Ribbon />
        <main className="relative min-h-[760px] flex-1 overflow-hidden bg-white">
          <Scene />
          <ViewCube />
          <BrowserPanel />
          <CommentsPanel />
          <SketchPalette />
          <NavBar />
        </main>
        <div className="flex h-[6px] shrink-0 bg-[#cbcbcb]">
          <div className="mt-1 ml-[270px] flex-1 bg-[#dfdfdf]" />
        </div>
        <Timeline />
      </div>
    </div>
  );
}
